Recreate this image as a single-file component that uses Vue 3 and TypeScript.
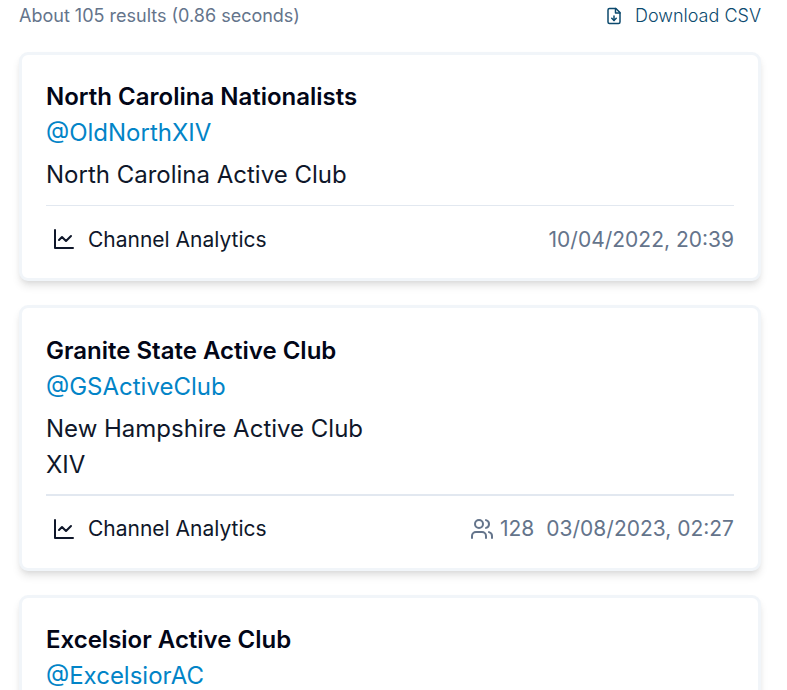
<script setup lang="ts">
interface Channel {
  name: string
  handle: string
  description: string[]
  members?: number
  date: string
}

const channels: Channel[] = [
  {
    name: 'North Carolina Nationalists',
    handle: '@OldNorthXIV',
    description: ['North Carolina Active Club'],
    date: '10/04/2022, 20:39',
  },
  {
    name: 'Granite State Active Club',
    handle: '@GSActiveClub',
    description: ['New Hampshire Active Club', 'XIV'],
    members: 128,
    date: '03/08/2023, 02:27',
  },
  {
    name: 'Excelsior Active Club',
    handle: '@ExcelsiorAC',
    description: [],
    date: '',
  },
]
</script>

<template>
  <main class="results">
    <header class="summary">
      <span>About 105 results (0.86 seconds)</span>
      <a class="download">
        <svg class="download-icon" viewBox="0 0 24 24">
          <path d="M14.5 2H6a2 2 0 0 0-2 2v16a2 2 0 0 0 2 2h12a2 2 0 0 0 2-2V7.5L14.5 2z" />
          <path d="M14 2v6h6" />
          <path d="M12 18v-6" />
          <path d="m9 15 3 3 3-3" />
        </svg>
        <span>Download CSV</span>
      </a>
    </header>
    <article
      v-for="channel in channels"
      :key="channel.handle"
      class="card"
      :class="{ tall: channel.members }"
    >
      <h2 class="name">{{ channel.name }}</h2>
      <a class="handle">{{ channel.handle }}</a>
      <div class="description">
        <p v-for="line in channel.description" :key="line">{{ line }}</p>
      </div>
      <footer v-if="channel.date" class="footer">
        <a class="analytics">
          <svg class="icon" viewBox="0 0 24 24">
            <path d="M3 3v18h18" />
            <path d="m19 9-5 5-4-4-3 3" />
          </svg>
          <span class="label">Channel Analytics</span>
        </a>
        <div class="meta">
          <div v-if="channel.members" class="members">
            <svg class="icon" viewBox="0 0 24 24">
              <path d="M16 21v-2a4 4 0 0 0-4-4H6a4 4 0 0 0-4 4v2" />
              <circle cx="9" cy="7" r="4" />
              <path d="M22 21v-2a4 4 0 0 0-3-3.87" />
              <path d="M16 3.13a4 4 0 0 1 0 7.75" />
            </svg>
            <span class="label">{{ channel.members }}</span>
          </div>
          <time class="label">{{ channel.date }}</time>
        </div>
      </footer>
    </article>
  </main>
</template>

<style>
body {
  margin: 0;
  background: #fff;
  overflow: hidden;
}
</style>

<style scoped>
.results {
  box-sizing: border-box;
  height: 690px;
  overflow: hidden;
  padding: 2px 26px 0 19px;
  font-family: Inter, "Liberation Sans", sans-serif;
  font-size: 24px;
  line-height: 36px;
  color: #0f172a;
}
.summary {
  display: flex;
  justify-content: space-between;
  align-items: center;
  height: 27px;
  margin-bottom: 23px;
  font-size: 18px;
  line-height: 27px;
  color: #64748b;
}
.download {
  display: flex;
  align-items: center;
  gap: 12px;
  font-weight: 300;
  color: #0c4a6e;
}
svg {
  display: block;
  flex: none;
  fill: none;
  stroke: currentColor;
  stroke-width: 2;
  stroke-linecap: round;
  stroke-linejoin: round;
}
.download-icon {
  width: 18px;
  height: 18px;
}
.card {
  border: 3px solid #f1f5f9;
  border-radius: 9px;
  padding: 24px 24px 0;
  margin-bottom: 24px;
  background: #fff;
  box-shadow: 0 6px 9px -1.5px rgba(0, 0, 0, 0.1), 0 3px 6px -3px rgba(0, 0, 0, 0.1);
}
.card.tall {
  padding-top: 25px;
}
.name {
  margin: 0;
  font-size: 24px;
  font-weight: 600;
  color: #020617;
}
.handle {
  display: block;
  color: #0284c7;
}
.description {
  margin: 6px 0 12px;
}
.tall .description {
  margin-bottom: 11px;
}
.description p {
  margin: 0;
}
.footer {
  display: flex;
  justify-content: space-between;
  box-sizing: border-box;
  height: 73px;
  padding-top: 21px;
  border-top: 1px solid #e2e8f0;
  font-size: 21px;
  line-height: 26px;
}
.tall .footer {
  height: 74px;
  border-top-width: 2px;
  line-height: 24px;
}
.analytics {
  display: flex;
  gap: 12px;
  padding-left: 6px;
}
.meta {
  display: flex;
  gap: 12px;
  color: #64748b;
}
.members {
  display: flex;
  gap: 6px;
}
.icon {
  width: 24px;
  height: 24px;
}
</style>
